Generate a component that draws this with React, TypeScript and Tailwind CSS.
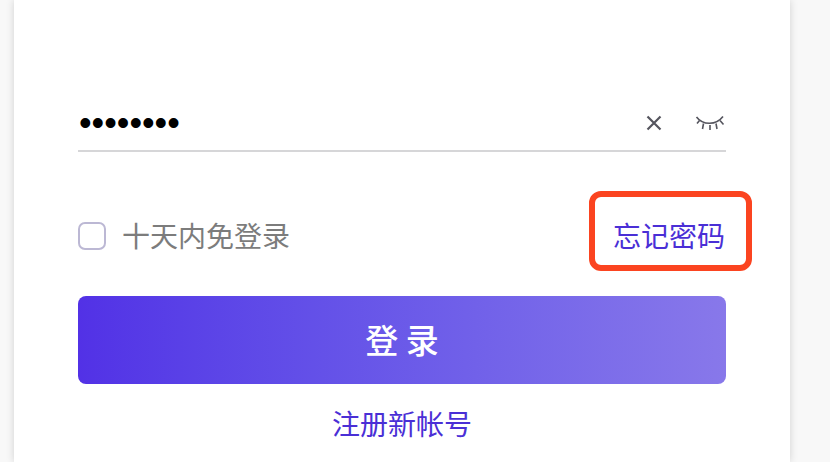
const cjk = '"Noto Sans CJK SC", "Noto Sans", sans-serif';

function ClearIcon() {
  return (
    <svg width="16" height="16" viewBox="0 0 16 16" fill="none" stroke="#55555e" strokeWidth="2.2">
      <path d="M1.5 1.5 14.5 14.5M14.5 1.5 1.5 14.5" />
    </svg>
  );
}

function EyeClosedIcon() {
  return (
    <svg width="30" height="18" viewBox="0 0 30 18" fill="none" stroke="#55555e" strokeWidth="1.6">
      <path d="M1.5 3C8 11.5 21 11.5 28 2.5" />
      <path d="M4.5 6.5 2 9.5M8.5 9.5 7.5 15M15 11V16M21 9.5 22 15M25 6.5 28.5 10.5" />
    </svg>
  );
}

export default function App() {
  return (
    <div className="h-[462px] w-[830px] overflow-hidden bg-[#f8f8f8]" style={{ fontFamily: cjk }}>
      <div className="ml-[14px] h-[462px] w-[776px] bg-white px-[64px] pt-[96px] shadow-[0_0_8px_rgba(0,0,0,0.16)]">
        <div className="flex h-[56px] items-center border-b-2 border-[#d6d6d8] pl-[1px]">
          <span className="flex-1 text-[36px] leading-none text-black" style={{ fontFamily: '"Liberation Sans", sans-serif' }}>
            ••••••••
          </span>
          <div className="mr-[1px] flex items-center gap-[33px]">
            <ClearIcon />
            <EyeClosedIcon />
          </div>
        </div>

        <div className="relative mt-[70px] flex h-[28px] items-center justify-between">
          <label className="flex items-center gap-4">
            <span className="h-[28px] w-[28px] rounded-[7px] border-2 border-[#bcb8d4] bg-white" />
            <span className="-translate-y-px text-[28px] leading-none text-[#7c7c7c]">十天内免登录</span>
          </label>
          <a className="mr-[1px] -translate-y-px text-[28px] leading-none text-[#4a2fd6]">忘记密码</a>
          <div className="absolute left-[511px] top-[-31px] h-[80px] w-[163px] rounded-[12px] border-[6px] border-[#fb4420]" />
        </div>

        <button className="mt-[46px] block h-[88px] w-[648px] rounded-[8px] bg-gradient-to-r from-[#5231e6] to-[#8878ea] text-[33px] font-medium text-white">
          登 录
        </button>
        <div className="mt-[19px] text-center text-[28px] leading-[40px] text-[#4a2fd6]">注册新帐号</div>
      </div>
    </div>
  );
}
